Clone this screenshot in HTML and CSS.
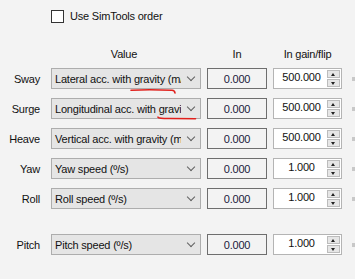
FILE: index.html
```html
<!DOCTYPE html>
<html lang="en">
<head>
  <meta charset="UTF-8">
  <title>Axis mapping</title>
  <link rel="stylesheet" href="styles.css">
</head>
<body>
  <div class="panel">
    <label class="option">
      <span class="check"></span>
      <span>Use SimTools order</span>
    </label>

    <div class="header">
      <span class="col-label"></span>
      <span class="col-value">Value</span>
      <span class="col-in">In</span>
      <span class="col-gain">In gain/flip</span>
    </div>

    <div class="row">
      <span class="col-label">Sway</span>
      <div class="combo"><span class="combo-text">Lateral acc. with gravity (m/s²)</span><span class="chevron"></span></div>
      <div class="readout">0.000</div>
      <div class="spin"><span class="spin-text">500.000</span><span class="spin-btns"><i class="up"></i><i class="down"></i></span></div>
      <span class="mark"></span>
    </div>

    <div class="row">
      <span class="col-label">Surge</span>
      <div class="combo"><span class="combo-text">Longitudinal acc. with gravity (m/s²)</span><span class="chevron"></span></div>
      <div class="readout">0.000</div>
      <div class="spin"><span class="spin-text">500.000</span><span class="spin-btns"><i class="up"></i><i class="down"></i></span></div>
      <span class="mark"></span>
    </div>

    <div class="row">
      <span class="col-label">Heave</span>
      <div class="combo"><span class="combo-text">Vertical acc. with gravity (m/s²)</span><span class="chevron"></span></div>
      <div class="readout">0.000</div>
      <div class="spin"><span class="spin-text">500.000</span><span class="spin-btns"><i class="up"></i><i class="down"></i></span></div>
      <span class="mark"></span>
    </div>

    <div class="row">
      <span class="col-label">Yaw</span>
      <div class="combo"><span class="combo-text">Yaw speed (º/s)</span><span class="chevron"></span></div>
      <div class="readout">0.000</div>
      <div class="spin"><span class="spin-text">1.000</span><span class="spin-btns"><i class="up"></i><i class="down"></i></span></div>
      <span class="mark"></span>
    </div>

    <div class="row">
      <span class="col-label">Roll</span>
      <div class="combo"><span class="combo-text">Roll speed (º/s)</span><span class="chevron"></span></div>
      <div class="readout">0.000</div>
      <div class="spin"><span class="spin-text">1.000</span><span class="spin-btns"><i class="up"></i><i class="down"></i></span></div>
      <span class="mark"></span>
    </div>

    <div class="row row-apart">
      <span class="col-label">Pitch</span>
      <div class="combo"><span class="combo-text">Pitch speed (º/s)</span><span class="chevron"></span></div>
      <div class="readout">0.000</div>
      <div class="spin"><span class="spin-text">1.000</span><span class="spin-btns"><i class="up"></i><i class="down"></i></span></div>
      <span class="mark"></span>
    </div>

    <!-- hand-drawn red underlines -->
    <svg class="scribble" width="355" height="279" viewBox="0 0 355 279">
      <path d="M131 90.2 C 145 89.6, 160 89.8, 172 90.3 C 174 90.5, 174.8 91.5, 175 93" />
      <path d="M158 117.2 C 159 118.4, 162 118.6, 170 118.5 C 180 118.5, 190 118.6, 195.5 118.7" />
    </svg>
  </div>
</body>
</html>
```

FILE: styles.css
```css
body {
  margin: 0;
  padding: 0;
  background-color: #f3f3f3;
  font-family: "Liberation Sans", Arial, sans-serif;
  font-size: 11px;
  letter-spacing: -0.2px;
  color: #111;
}

.panel {
  position: relative;
  width: 355px;
  height: 279px;
  overflow: hidden;
}

.option {
  display: flex;
  align-items: center;
  gap: 6px;
  padding: 10px 0 0 51px;
  height: 13px;
  line-height: 13px;
}

.check {
  width: 13px;
  height: 13px;
  box-sizing: border-box;
  border: 1px solid #333;
  background-color: #fff;
}

.header {
  display: flex;
  margin-top: 24px;
  height: 14px;
  line-height: 14px;
  margin-bottom: 7px;
}

.header span {
  text-align: center;
}

.row {
  display: flex;
  align-items: center;
  height: 21px;
  margin-bottom: 9px;
}

.row-apart {
  margin-top: 25px;
}

.col-label {
  width: 40px;
  flex: none;
  text-align: right;
  margin-right: 11px;
}

.col-value {
  width: 146px;
  margin-right: 10px;
}

.col-in {
  width: 60px;
  margin-right: 6px;
}

.col-gain {
  width: 69px;
}

.combo {
  display: flex;
  align-items: center;
  width: 150px;
  height: 21px;
  box-sizing: border-box;
  border: 1px solid #adadad;
  background-color: #e5e5e5;
  margin-right: 6px;
}

.combo-text {
  flex: 1;
  overflow: hidden;
  white-space: nowrap;
  padding-left: 3px;
}

.chevron {
  width: 19px;
  height: 19px;
  flex: none;
  position: relative;
}

.chevron::after {
  content: "";
  position: absolute;
  left: 7px;
  top: 5px;
  width: 5px;
  height: 5px;
  border-right: 1px solid #606060;
  border-bottom: 1px solid #606060;
  transform: rotate(45deg);
}

.readout {
  width: 60px;
  height: 21px;
  box-sizing: border-box;
  border: 1px solid #6e6e6e;
  text-align: center;
  line-height: 20px;
  margin-right: 6px;
  color: #1a1a3a;
}

.spin {
  display: flex;
  align-items: center;
  width: 69px;
  height: 21px;
  box-sizing: border-box;
  border: 1px solid #b4b4b4;
  background-color: #fff;
  padding-right: 1px;
}

.spin-text {
  flex: 1;
  text-align: center;
  line-height: 17px;
  align-self: flex-start;
  padding-left: 2px;
}

.spin-btns {
  display: flex;
  flex-direction: column;
  width: 13px;
  height: 17px;
  gap: 1px;
}

.spin-btns i {
  flex: 1;
  position: relative;
  background-color: #e6e6e6;
  border: 1px solid #bcbcbc;
}

.spin-btns i::after {
  content: "";
  position: absolute;
  left: 3px;
  width: 0;
  height: 0;
  border-left: 2.5px solid transparent;
  border-right: 2.5px solid transparent;
}

.spin-btns .up::after {
  top: 2px;
  border-bottom: 3px solid #222;
}

.spin-btns .down::after {
  top: 2px;
  border-top: 3px solid #222;
}

.mark {
  width: 3px;
  height: 4px;
  margin-left: 10px;
  background-color: #c8c8c8;
}

.scribble {
  position: absolute;
  left: 0;
  top: 0;
  pointer-events: none;
}

.scribble path {
  fill: none;
  stroke: #e0201c;
  stroke-width: 1.6;
  stroke-linecap: round;
}
```
